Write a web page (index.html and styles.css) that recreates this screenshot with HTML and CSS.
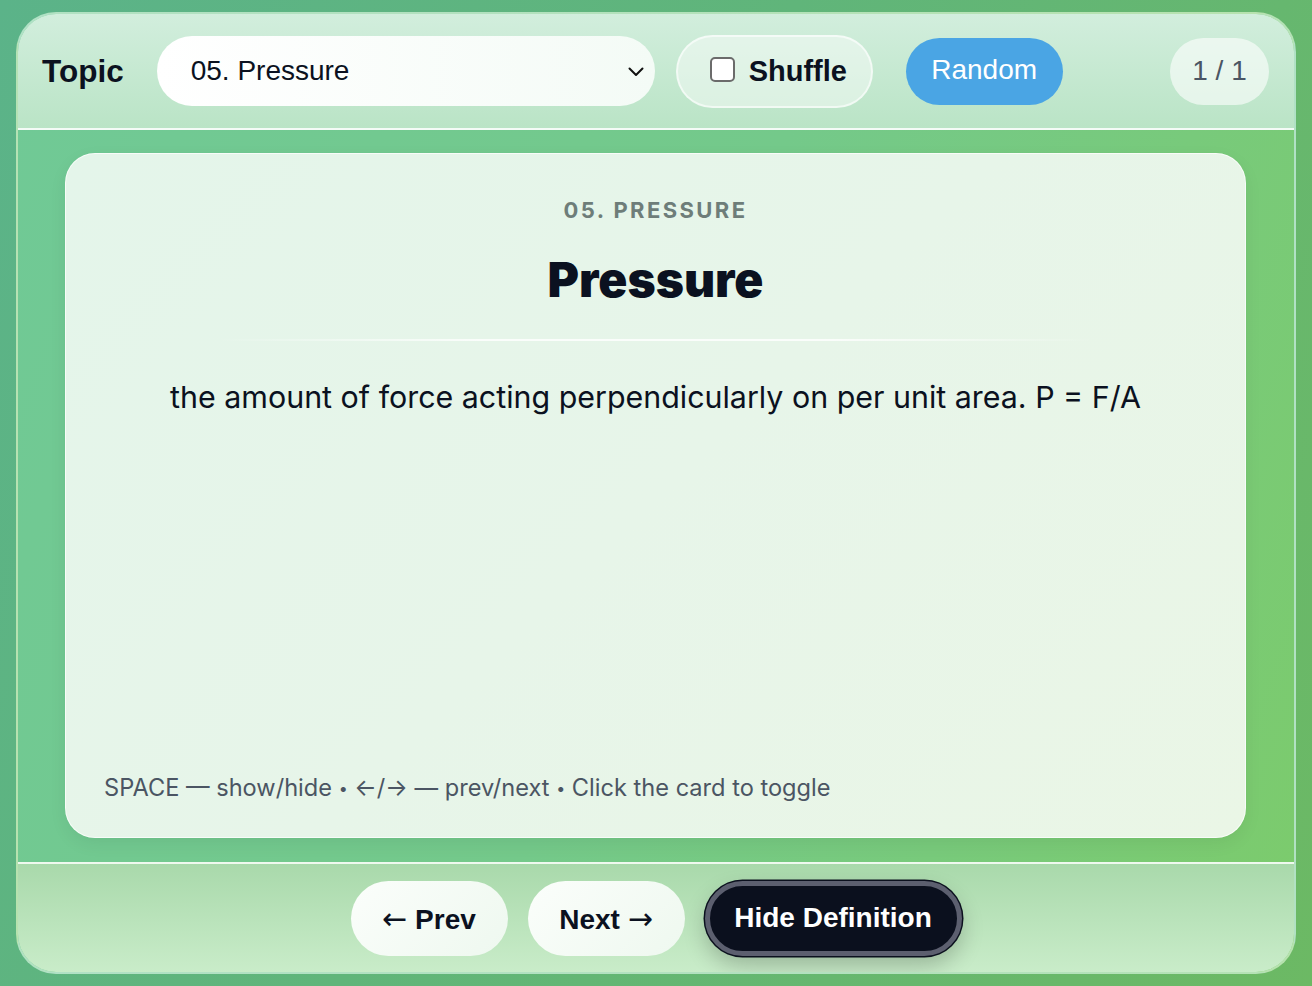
FILE: index.html
```html
<!DOCTYPE html>
<html lang="en">
<head>
<meta charset="utf-8">
<title>Flashcards</title>
<link rel="stylesheet" href="styles.css">
</head>
<body>
<div class="app">
  <header class="toolbar">
    <label class="topic-label" for="topic">Topic</label>
    <div class="select">
      <span class="select-text">05. Pressure</span>
      <svg class="chevron" width="16" height="10" viewBox="0 0 16 10"><path d="M1.5 1.5 L8 8 L14.5 1.5" fill="none" stroke="#111" stroke-width="2" stroke-linecap="round" stroke-linejoin="round"/></svg>
    </div>
    <label class="shuffle"><span class="checkbox"></span><span>Shuffle</span></label>
    <button class="random">Random</button>
    <div class="counter">1 / 1</div>
  </header>
  <main class="stage">
    <section class="card">
      <div class="eyebrow">05. PRESSURE</div>
      <h1 class="term">Pressure</h1>
      <div class="divider"></div>
      <p class="definition">the amount of force acting perpendicularly on per unit area. P = F/A</p>
      <p class="hint">SPACE — show/hide <span class="dot">•</span> ←/→ — prev/next <span class="dot">•</span> Click the card to toggle</p>
    </section>
  </main>
  <footer class="controls">
    <button class="btn light"><span class="arrow">←</span> Prev</button>
    <button class="btn light">Next <span class="arrow">→</span></button>
    <button class="btn dark">Hide Definition</button>
  </footer>
</div>
</body>
</html>
```
FILE: styles.css
```css
* { box-sizing: border-box; }
html, body { margin: 0; height: 100%; }
body {
  width: 1312px;
  height: 986px;
  overflow: hidden;
  font-family: "Liberation Sans", Arial, sans-serif;
  background: linear-gradient(115deg, #5bb389 0%, #60b57a 45%, #6cb964 100%);
  padding: 12px 16px 12px 16px;
}
.app {
  height: 962px;
  border: 2px solid rgba(255,255,255,0.45);
  border-radius: 40px;
  overflow: hidden;
  display: flex;
  flex-direction: column;
  background: linear-gradient(110deg, #70c996 0%, #74c98a 50%, #7ccb6c 100%);
}
.toolbar {
  height: 116px;
  flex: none;
  display: flex;
  align-items: center;
  padding: 0 25px 0 24px;
  background: linear-gradient(180deg, #d2eedd 0%, #bae4c6 100%);
  border-bottom: 2px solid rgba(255,255,255,0.75);
}
.topic-label {
  font-weight: 700;
  font-size: 31.5px;
  color: #0b1120;
  margin-right: 33px;
}
.select {
  width: 498px;
  height: 70px;
  border-radius: 35px;
  background: linear-gradient(90deg, #ffffff 0%, #f4fbf6 100%);
  display: flex;
  align-items: center;
  padding: 0 11px 0 34px;
  justify-content: space-between;
}
.select-text { font-size: 28px; color: #0b1120; }
.chevron { margin-top: 2px; }
.shuffle {
  margin-left: 21px;
  height: 73px;
  width: 197px;
  border-radius: 37px;
  background: rgba(255,255,255,0.45);
  border: 2px solid rgba(255,255,255,0.6);
  display: flex;
  align-items: center;
  padding-left: 32px;
  gap: 14px;
  font-weight: 700;
  font-size: 29px;
  color: #0b1120;
}
.checkbox {
  width: 25px;
  height: 25px;
  border: 2px solid #6b6b6b;
  border-radius: 5px;
  background: #fff;
  margin-top: -3px;
}
.random {
  margin-left: 33px;
  height: 67px;
  width: 157px;
  border: none;
  border-radius: 34px;
  background: #4aa5e4;
  color: #fff;
  font-family: "Liberation Sans", Arial, sans-serif;
  font-size: 28px;
  padding: 0 0 3px 0;
}
.counter {
  margin-left: auto;
  height: 67px;
  width: 99px;
  border-radius: 34px;
  background: rgba(255,255,255,0.6);
  display: flex;
  align-items: center;
  justify-content: center;
  font-size: 28px;
  color: #4b5563;
}
.stage {
  flex: 1;
  padding: 23px 48px 24px 47px;
  display: flex;
}
.card {
  flex: 1;
  border-radius: 30px;
  background: linear-gradient(135deg, #e4f5ea 0%, #e7f5e9 50%, #eaf6e6 100%);
  border: 1px solid rgba(255,255,255,0.7);
  box-shadow: 0 6px 18px rgba(0,0,0,0.06);
  display: flex;
  flex-direction: column;
  align-items: center;
  padding: 40px 38px 34px 38px;
  font-family: Inter, "Noto Sans", sans-serif;
}
.eyebrow {
  font-weight: 700;
  font-size: 22px;
  letter-spacing: 2.4px;
  color: #6e7d79;
  line-height: 32px;
}
.term {
  margin: 25px 0 0 0;
  font-weight: 900;
  font-size: 48px;
  line-height: 58px;
  color: #0b1120;
}
.divider {
  width: 880px;
  height: 2px;
  margin-top: 30px;
  background: linear-gradient(90deg, rgba(255,255,255,0) 0%, rgba(255,255,255,0.8) 30%, rgba(255,255,255,0.8) 70%, rgba(255,255,255,0) 100%);
}
.definition {
  margin: 36px 0 0 0;
  font-size: 30.4px;
  line-height: 40px;
  color: #0b1120;
  text-align: center;
}
.hint {
  margin: auto 0 0 0;
  align-self: flex-start;
  font-size: 23.6px;
  line-height: 30px;
  color: #4b5563;
}
.dot { font-size: 16px; vertical-align: 2px; }
.controls {
  height: 110px;
  flex: none;
  display: flex;
  align-items: center;
  justify-content: center;
  gap: 20px;
  padding-bottom: 0;
  background: linear-gradient(180deg, #a9d9ab 0%, #c9ecc9 100%);
  border-top: 2px solid rgba(255,255,255,0.7);
}
.btn {
  height: 75px;
  border-radius: 38px;
  border: none;
  font-family: "Liberation Sans", Arial, sans-serif;
  font-weight: 700;
  font-size: 28px;
  padding: 0;
}
.arrow { font-family: "DejaVu Sans", sans-serif; font-weight: 400; font-size: 30px; }
.btn.light {
  width: 157px;
  background: linear-gradient(135deg, #fbfefb 0%, #eef8ef 100%);
  color: #0b1120;
}
.btn.dark {
  width: 257px;
  background: #0b101e;
  color: #fff;
  border: 5px solid #5c5f6f;
  box-shadow: 0 0 0 1.5px #0b101e, 0 10px 22px rgba(0,0,0,0.22);
}
```
